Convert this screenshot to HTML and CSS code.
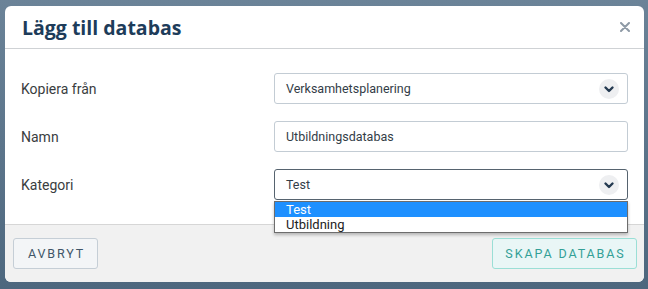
FILE: index.html
```html
<!DOCTYPE html>
<html lang="sv">
<head>
    <meta charset="UTF-8">
    <meta name="viewport" content="width=device-width, initial-scale=1.0">
    <title>Lägg till databas</title>
    <link rel="stylesheet" href="styles.css">
</head>
<body>
    <div class="modal">
        <header class="modal-header">
            <h1>Lägg till databas</h1>
            <button class="close" aria-label="Stäng">
                <svg width="10" height="10" viewBox="0 0 10 10"><path d="M1 1L9 9M9 1L1 9" stroke="#8e9aa6" stroke-width="2" stroke-linecap="round"/></svg>
            </button>
        </header>

        <main class="modal-body">
            <div class="row">
                <label>Kopiera från</label>
                <div class="select">
                    <span>Verksamhetsplanering</span>
                    <span class="chevron"><svg width="20" height="20" viewBox="0 0 20 20"><circle cx="10" cy="10" r="10" fill="#eeeff1"/><path d="M6.5 8.5L10 12L13.5 8.5" fill="none" stroke="#243a50" stroke-width="2.4" stroke-linecap="round" stroke-linejoin="round"/></svg></span>
                </div>
            </div>
            <div class="row">
                <label>Namn</label>
                <div class="input">Utbildningsdatabas</div>
            </div>
            <div class="row">
                <label>Kategori</label>
                <div class="select focused">
                    <span>Test</span>
                    <span class="chevron"><svg width="20" height="20" viewBox="0 0 20 20"><circle cx="10" cy="10" r="10" fill="#eeeff1"/><path d="M6.5 8.5L10 12L13.5 8.5" fill="none" stroke="#243a50" stroke-width="2.4" stroke-linecap="round" stroke-linejoin="round"/></svg></span>
                    <ul class="options">
                        <li class="active">Test</li>
                        <li>Utbildning</li>
                    </ul>
                </div>
            </div>
        </main>

        <footer class="modal-footer">
            <button class="btn btn-cancel">Avbryt</button>
            <button class="btn btn-create">Skapa databas</button>
        </footer>
    </div>
</body>
</html>
```

FILE: styles.css
```css
* {
    margin: 0;
    padding: 0;
    box-sizing: border-box;
}

body {
    font-family: Roboto, 'Liberation Sans', sans-serif;
    background: linear-gradient(#6b8398, #4d677e);
    width: 648px;
    height: 289px;
    padding: 6px 4px 7px 5px;
    overflow: hidden;
}

.modal {
    background-color: #ffffff;
    border-radius: 6px;
    height: 276px;
    display: flex;
    flex-direction: column;
}

/* Header */
.modal-header {
    height: 43px;
    border-bottom: 1px solid #cfd2d5;
    display: flex;
    align-items: center;
    justify-content: space-between;
    padding: 0 14px 0 17px;
}

.modal-header h1 {
    font-family: 'Open Sans', sans-serif;
    font-size: 19.5px;
    font-weight: 700;
    color: #1d3c5a;
}

.close {
    background: none;
    border: none;
    display: flex;
    margin-top: -1px;
}

/* Body */
.modal-body {
    padding: 24px 16px 24px 16px;
    display: grid;
    gap: 17px;
}

.row {
    display: grid;
    grid-template-columns: 253px 1fr;
    align-items: center;
}

.row label {
    font-size: 14px;
    color: #3a3d40;
}

.select, .input {
    position: relative;
    height: 31px;
    border: 1px solid #c3ccd4;
    border-radius: 3px;
    font-size: 12.5px;
    color: #333d47;
    display: flex;
    align-items: center;
    justify-content: space-between;
    padding: 0 8px 0 11px;
}

.select.focused {
    border-color: #56636f;
}

.chevron {
    display: flex;
}

/* Dropdown */
.options {
    position: absolute;
    top: 31px;
    left: -1px;
    right: -1px;
    list-style: none;
    background: #fff;
    border: 1px solid #6d6d6d;
    box-shadow: 0 2px 3px rgba(0, 0, 0, 0.25);
    z-index: 2;
}

.options li {
    height: 15px;
    line-height: 15px;
    font-size: 13px;
    padding-left: 11px;
    color: #222;
}

.options li.active {
    background-color: #1e90ff;
    color: #fff;
}

/* Footer */
.modal-footer {
    flex: 1;
    background-color: #f1f1f1;
    border-top: 1px solid #d6d6d6;
    border-radius: 0 0 6px 6px;
    display: flex;
    justify-content: space-between;
    align-items: center;
    padding: 0 7px 1px 8px;
}

.btn {
    height: 31px;
    border-radius: 3px;
    font-family: Roboto, 'Liberation Sans', sans-serif;
    font-size: 12.5px;
    font-weight: 400;
    text-transform: uppercase;
    letter-spacing: 1.9px;
    white-space: nowrap;
    padding: 0;
    text-indent: 2px;
}

.btn-cancel {
    width: 85px;
    background-color: #f3f5f7;
    border: 1px solid #c5ced6;
    color: #3f5568;
}

.btn-create {
    width: 145px;
    background-color: #e9f6f6;
    border: 1px solid #9adfd6;
    color: #33a097;
}
```
